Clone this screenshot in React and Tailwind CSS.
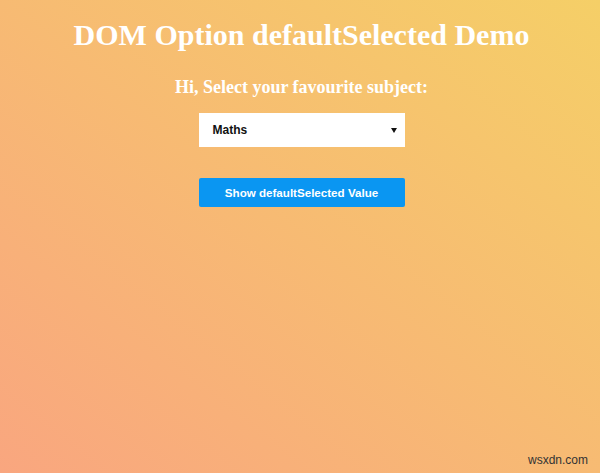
export default function App() {
  return (
    <div className="relative w-full h-[473px] overflow-hidden bg-[linear-gradient(to_top_right,#f9a67f,#f5cf67)]">
      <div className="flex flex-col items-center pl-[3px]">
        <h1 className="mt-[17px] text-[30px] leading-[36px] font-bold text-white [font-family:'Liberation_Serif',serif]">
          DOM Option defaultSelected Demo
        </h1>
        <h3 className="mt-[23px] text-[18px] leading-[22px] font-bold text-white [font-family:'Liberation_Serif',serif]">
          Hi, Select your favourite subject:
        </h3>
        <div className="mt-[15px] w-[206px] h-[34px] bg-white flex items-center justify-between pl-[14px] pr-[8px] [font-family:'Liberation_Sans',sans-serif]">
          <span className="text-[12px] font-bold text-[#111]">Maths</span>
          <svg width="6" height="5" viewBox="0 0 6 5">
            <polygon points="0,0 6,0 3,5" fill="#111" />
          </svg>
        </div>
        <button className="mt-[31px] w-[206px] h-[29px] bg-[#0a96f2] rounded-[2px] text-white text-[11.6px] font-bold [font-family:'Liberation_Sans',sans-serif]">
          Show defaultSelected Value
        </button>
      </div>
      <div className="absolute right-[12px] bottom-[4px] text-[12px] text-[#333] [font-family:'Liberation_Sans',sans-serif]">
        wsxdn.com
      </div>
    </div>
  );
}
